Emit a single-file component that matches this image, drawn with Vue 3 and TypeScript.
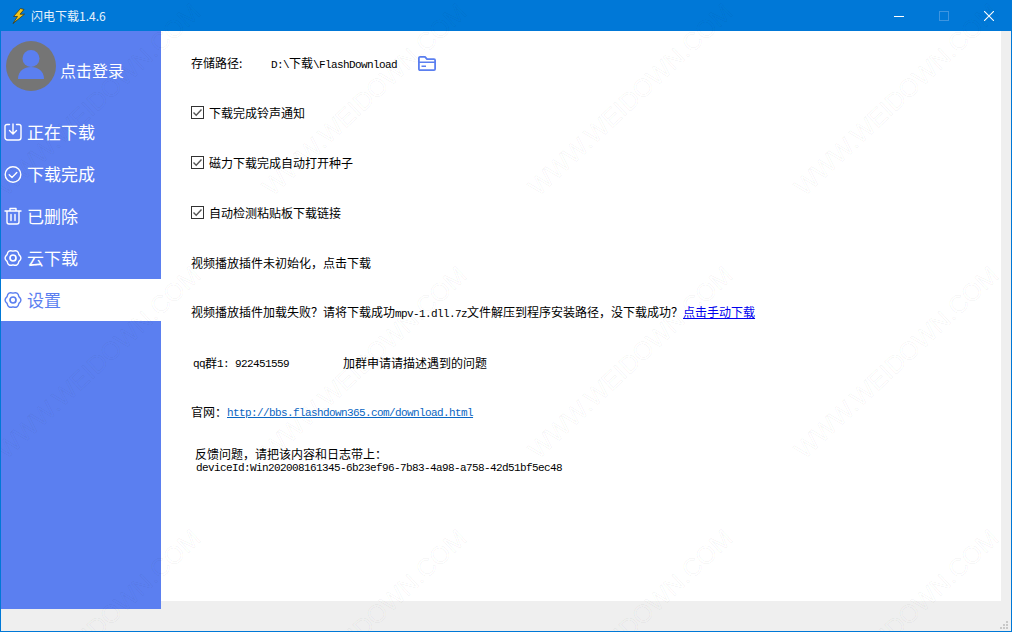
<template>
  <div class="window">
    <!-- Title bar -->
    <header class="titlebar">
      <svg class="logo" viewBox="0 0 14 16" width="14" height="16">
        <path d="M8.5 0.5 L1.5 8.5 L5.5 8.5 L1 15.5 L12.5 6.2 L8 6.2 L12 1.5 Z" fill="#f5c518" stroke="#3a3a1a" stroke-width="0.8" stroke-linejoin="round" />
      </svg>
      <span class="title">闪电下载1.4.6</span>
      <div class="win-buttons">
        <span class="win-btn"><svg width="10" height="10" viewBox="0 0 10 10"><path d="M0 5.5H10" stroke="#fff" /></svg></span>
        <span class="win-btn"><svg width="10" height="10" viewBox="0 0 10 10"><rect x="0.5" y="0.5" width="9" height="9" fill="none" stroke="#3d95e0" /></svg></span>
        <span class="win-btn"><svg width="10" height="10" viewBox="0 0 10 10"><path d="M0 0L10 10M10 0L0 10" stroke="#fff" stroke-width="1.1" /></svg></span>
      </div>
    </header>

    <div class="body">
      <!-- Sidebar -->
      <aside class="sidebar">
        <div class="profile">
          <div class="avatar">
            <svg viewBox="0 0 50 50" width="50" height="50">
              <circle cx="25" cy="25" r="25" fill="#757575" />
              <circle cx="25" cy="17.5" r="8.5" fill="#5b7ff0" />
              <path d="M12 38 C12 30 18 26 25 26 C32 26 38 30 38 38 Z" fill="#5b7ff0" />
            </svg>
          </div>
          <span class="login">点击登录</span>
        </div>
        <nav class="nav">
          <div
            v-for="item in navItems"
            :key="item.label"
            class="nav-item"
            :class="{ active: item.label === activeLabel }"
          >
            <svg class="nav-icon" viewBox="0 0 18 18" width="18" height="18" fill="none" stroke="currentColor" stroke-width="1.4" stroke-linecap="round" stroke-linejoin="round">
              <template v-if="item.icon === 'download'">
                <path d="M5.5 1.5H3A2 2 0 0 0 1 3.5V14.5A2.5 2.5 0 0 0 3.5 17H14.5A2.5 2.5 0 0 0 17 14.5V3.5A2 2 0 0 0 15 1.5H12.5" />
                <path d="M9 1V10.5M5.5 7.5L9 11L12.5 7.5" />
              </template>
              <template v-else-if="item.icon === 'check'">
                <circle cx="9" cy="9.5" r="7.8" />
                <path d="M5.2 9.8L8 12.4L12.8 7.6" />
              </template>
              <template v-else-if="item.icon === 'trash'">
                <path d="M1 4H17M6 4V1.5H12V4M3 4V15A2 2 0 0 0 5 17H13A2 2 0 0 0 15 15V4M7 7.5V13.5M11 7.5V13.5" />
              </template>
              <template v-else>
                <path d="M14.9 5.6Q19 9 14.9 12.4Q14 17.66 9 15.8Q4 17.66 3.1 12.4Q-1 9 3.1 5.6Q4 .34 9 2.2Q14 .34 14.9 5.6Z" />
                <circle cx="9" cy="9" r="3" stroke-width="1.7" />
              </template>
            </svg>
            <span class="nav-label">{{ item.label }}</span>
          </div>
        </nav>
      </aside>

      <!-- Settings panel -->
      <main class="panel">
        <div class="row path-row">
          <span class="path-label">存储路径:</span>
          <span class="path-value"><span class="latin">D:\</span>下载<span class="latin">\FlashDownload</span></span>
          <svg class="folder" viewBox="0 0 18 15" width="18" height="15" fill="none" stroke="#5b7ff0" stroke-width="1.8" stroke-linejoin="round">
            <path d="M.9 13V2A1.1 1.1 0 0 1 2 .9H7L9 3.2H16A1.1 1.1 0 0 1 17.1 4.3V13A1.1 1.1 0 0 1 16 14.1H2A1.1 1.1 0 0 1 .9 13Z" />
            <path d="M1 6.2H17M3.5 10.2H8" stroke-width="1.4" />
          </svg>
        </div>

        <label v-for="option in options" :key="option" class="row check-row">
          <span class="checkbox">
            <svg viewBox="0 0 11 11" width="11" height="11" fill="none"><path d="M1.5 5.5L4.2 8.2L9.5 2.5" stroke="#555" stroke-width="1.4" /></svg>
          </span>
          <span>{{ option }}</span>
        </label>

        <div class="row">视频播放插件未初始化&#xFF0C;点击下载</div>

        <div class="row fail-row"><span>视频播放插件加载失败&#xFF1F;请将下载成功<span class="latin">mpv-1.dll.7z</span>文件解压到程序安装路径&#xFF0C;没下载成功&#xFF1F;<a class="link" href="#">点击手动下载</a></span></div>

        <div class="row qq-row">
          <span class="qq"><span class="latin raised">qq</span>群<span class="latin raised">1: 922451559</span></span>
          <span>加群申请请描述遇到的问题</span>
        </div>

        <div class="row site-row"><span>官网&#xFF1A;<a class="link url latin raised" href="#">http://bbs.flashdown365.com/download.html</a></span></div>

        <div class="feedback">
          <div class="feedback-title">反馈问题&#xFF0C;请把该内容和日志带上&#xFF1A;</div>
          <div class="latin device">deviceId:Win202008161345-6b23ef96-7b83-4a98-a758-42d51bf5ec48</div>
        </div>
      </main>
    </div>

    <div class="grip">
      <i v-for="n in 6" :key="n" />
    </div>

    <!-- Watermark over the whole shot -->
    <div class="watermark">
      <span
        v-for="mark in marks"
        :key="mark.left + '-' + mark.top"
        class="mark"
        :style="{ left: mark.left + 'px', top: mark.top + 'px' }"
      >WWW.WEIDOWN.COM</span>
    </div>
  </div>
</template>

<script setup lang="ts">
interface NavItem {
  label: string;
  icon: 'download' | 'check' | 'trash' | 'gear';
}

const activeLabel = '设置';

const navItems: NavItem[] = [
  { label: '正在下载', icon: 'download' },
  { label: '下载完成', icon: 'check' },
  { label: '已删除', icon: 'trash' },
  { label: '云下载', icon: 'gear' },
  { label: '设置', icon: 'gear' },
];

const options = ['下载完成铃声通知', '磁力下载完成自动打开种子', '自动检测粘贴板下载链接'];

// watermark repeats on a 266 x 263 lattice
const marks = [8, 274, 540, 806].flatMap((left) =>
  [175, 438, 701].map((top) => ({ left, top })),
);
</script>

<style scoped>
.window {
  position: relative;
  width: 1012px;
  height: 632px;
  box-sizing: border-box;
  border: 1px solid #0078d7;
  border-top: 0;
  background: #efefef;
  overflow: hidden;
  display: flex;
  flex-direction: column;
  font-family: "Noto Sans CJK SC", sans-serif;
  font-size: 12px;
  color: #000;
}

.titlebar {
  height: 31px;
  flex: none;
  background: #0078d7;
  display: flex;
  align-items: center;
  padding-left: 11px;
  color: #fff;
}

.logo {
  margin-right: 5px;
}

.title {
  color: #e8f2fb;
}

.win-buttons {
  margin-left: auto;
  display: flex;
  align-items: center;
}

.win-btn {
  width: 45px;
  height: 31px;
  display: flex;
  align-items: center;
  justify-content: center;
}

.body {
  flex: 1;
  display: flex;
  align-items: flex-start;
}

.sidebar {
  width: 160px;
  height: 578px;
  flex: none;
  background: #5b7ff0;
  color: #fff;
}

.profile {
  height: 80px;
  padding: 10px 0 0 5px;
  box-sizing: border-box;
  display: flex;
  align-items: flex-start;
}

.avatar {
  width: 50px;
  height: 50px;
}

.login {
  margin: 17px 0 0 4px;
  font-size: 16px;
  line-height: 24px;
}

.nav-item {
  height: 42px;
  display: flex;
  align-items: center;
  padding-left: 3px;
}

.nav-item.active {
  background: #fff;
  color: #5b7ff0;
}

.nav-icon {
  flex: none;
  overflow: visible;
}

.nav-label {
  margin-left: 5px;
  font-size: 17px;
  line-height: 24px;
}

.panel {
  width: 840px;
  height: 570px;
  flex: none;
  background: #fff;
  box-sizing: border-box;
  padding: 21px 0 0 30px;
}

.row {
  height: 20px;
  margin-bottom: 30px;
  display: flex;
  align-items: center;
  white-space: nowrap;
}

.latin {
  font-family: "Liberation Mono", monospace;
  font-size: 11px;
  letter-spacing: -0.6px;
  white-space: pre;
}

.raised {
  vertical-align: 1px;
}

.path-label {
  width: 80px;
}

.folder {
  margin: 2px 0 0 21px;
}

.checkbox {
  width: 11px;
  height: 11px;
  border: 1px solid #333;
  margin-right: 5px;
  display: flex;
  background: #fff;
}

.fail-row {
  margin-top: -1px;
  margin-bottom: 31px;
}

.qq-row {
  padding-left: 2px;
  margin-bottom: 29px;
}

.qq {
  width: 150px;
}

.link {
  color: #0000ee;
  text-decoration: underline;
}

.url {
  color: #0a66c2;
}

.site-row {
  margin-bottom: 24px;
}

.feedback {
  padding-left: 4px;
}

.feedback-title {
  line-height: 17px;
}

.device {
  line-height: 13px;
  padding-left: 1px;
}

.grip {
  position: absolute;
  right: 3px;
  bottom: 2px;
  display: grid;
  grid-template-columns: repeat(3, 2px);
  grid-template-rows: repeat(3, 2px);
  gap: 1px;
}

.grip i {
  background: #c8c8c8;
}

.grip i:nth-child(1) {
  grid-area: 1 / 3;
}

.grip i:nth-child(2) {
  grid-area: 2 / 2;
}

.grip i:nth-child(3) {
  grid-area: 2 / 3;
}

.grip i:nth-child(4) {
  grid-area: 3 / 1;
}

.grip i:nth-child(5) {
  grid-area: 3 / 2;
}

.grip i:nth-child(6) {
  grid-area: 3 / 3;
}

.watermark {
  position: absolute;
  inset: 0;
  pointer-events: none;
  overflow: hidden;
}

.mark {
  position: absolute;
  transform: rotate(-43deg);
  transform-origin: left bottom;
  font-family: "Liberation Sans", sans-serif;
  font-size: 25px;
  line-height: 25px;
  white-space: nowrap;
  color: transparent;
  -webkit-text-stroke: 1px rgba(0, 0, 0, 0.04);
}
</style>
